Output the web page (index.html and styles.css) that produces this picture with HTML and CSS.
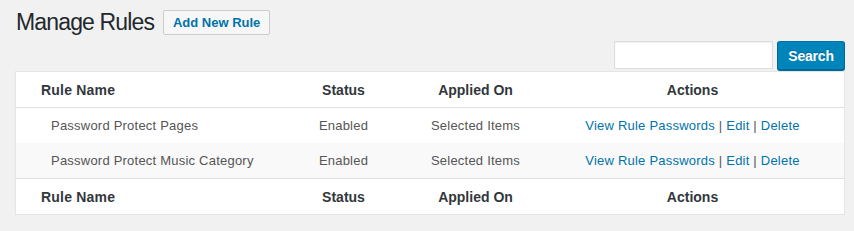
FILE: index.html
```html
<!DOCTYPE html>
<html>
<head>
<meta charset="utf-8">
<link rel="stylesheet" href="styles.css">
</head>
<body>
<div class="wrap">
  <div class="title-row">
    <h1 class="title">Manage Rules</h1>
    <a class="btn-add" href="#">Add New Rule</a>
  </div>
  <div class="search-row">
    <input class="search-input" type="text">
    <button class="btn-search">Search</button>
  </div>
  <table class="rules">
    <thead>
      <tr><th class="c-name">Rule Name</th><th class="c-status">Status</th><th class="c-applied">Applied On</th><th class="c-actions">Actions</th></tr>
    </thead>
    <tbody>
      <tr><td class="c-name">Password Protect Pages</td><td class="c-status">Enabled</td><td class="c-applied">Selected Items</td><td class="c-actions"><a href="#">View Rule Passwords</a> | <a href="#">Edit</a> | <a href="#">Delete</a></td></tr>
      <tr class="alt"><td class="c-name">Password Protect Music Category</td><td class="c-status">Enabled</td><td class="c-applied">Selected Items</td><td class="c-actions"><a href="#">View Rule Passwords</a> | <a href="#">Edit</a> | <a href="#">Delete</a></td></tr>
    </tbody>
    <tfoot>
      <tr><th class="c-name">Rule Name</th><th class="c-status">Status</th><th class="c-applied">Applied On</th><th class="c-actions">Actions</th></tr>
    </tfoot>
  </table>
</div>
</body>
</html>
```
FILE: styles.css
```css
html, body {
  margin: 0;
  padding: 0;
  background: #f1f1f1;
  font-family: "Liberation Sans", Arial, sans-serif;
  color: #444;
}
.wrap {
  margin: 0 9px 0 15px;
}
.title-row {
  display: flex;
  align-items: center;
  gap: 9px;
  padding-top: 10px;
  height: 25px;
}
.title {
  margin: 0 0 0 1px;
  font-size: 23px;
  font-weight: 400;
  letter-spacing: -0.85px;
  color: #23282d;
  line-height: 25px;
}
.btn-add {
  display: inline-flex;
  align-items: center;
  box-sizing: border-box;
  height: 25px;
  width: 107px;
  justify-content: center;
  border: 1px solid #ccc;
  border-radius: 2px;
  background: #f7f7f7;
  color: #0073aa;
  font-size: 13px;
  font-weight: 700;
  text-decoration: none;
}
.search-row {
  display: flex;
  justify-content: flex-end;
  gap: 4px;
  margin-top: 6px;
  height: 30px;
}
.search-input {
  box-sizing: border-box;
  width: 159px;
  height: 28px;
  margin: 0;
  border: 1px solid #ddd;
  background: #fff;
  box-shadow: inset 0 1px 2px rgba(0,0,0,.07);
}
.btn-search {
  box-sizing: border-box;
  width: 68px;
  height: 29px;
  margin: 0;
  border: 1px solid #0073aa;
  border-color: #0073aa #006799 #006799;
  border-radius: 3px;
  background: #0085ba;
  box-shadow: 0 1px 0 #006799;
  color: #fff;
  font-family: "Liberation Sans", Arial, sans-serif;
  font-size: 14px;
  font-weight: 700;
  letter-spacing: -0.2px;
  text-shadow: 0 -1px 1px #006799;
}
.rules {
  width: 100%;
  border-collapse: collapse;
  border: 1px solid #e5e5e5;
  background: #fff;
  box-shadow: 0 1px 1px rgba(0,0,0,.04);
  table-layout: fixed;
}
.rules th {
  height: 35px;
  padding: 0;
  font-size: 14px;
  font-weight: 700;
  color: #32373c;
  text-align: center;
}
.rules thead th { border-bottom: 1px solid #e1e1e1; }
.rules tfoot th { border-top: 1px solid #e1e1e1; }
.rules td {
  height: 35px;
  padding: 0;
  font-size: 13px;
  letter-spacing: 0.22px;
  color: #555;
  text-align: center;
}
.rules tr.alt td { background: #f9f9f9; }
.rules th.c-name { text-align: left; padding-left: 25px; letter-spacing: 0.2px; }
.rules td.c-name { text-align: left; padding-left: 35px; }
.c-name { width: 236px; }
.c-status { width: 133px; }
.c-applied { width: 131px; }
.rules a { color: #0073aa; text-decoration: none; }
```
